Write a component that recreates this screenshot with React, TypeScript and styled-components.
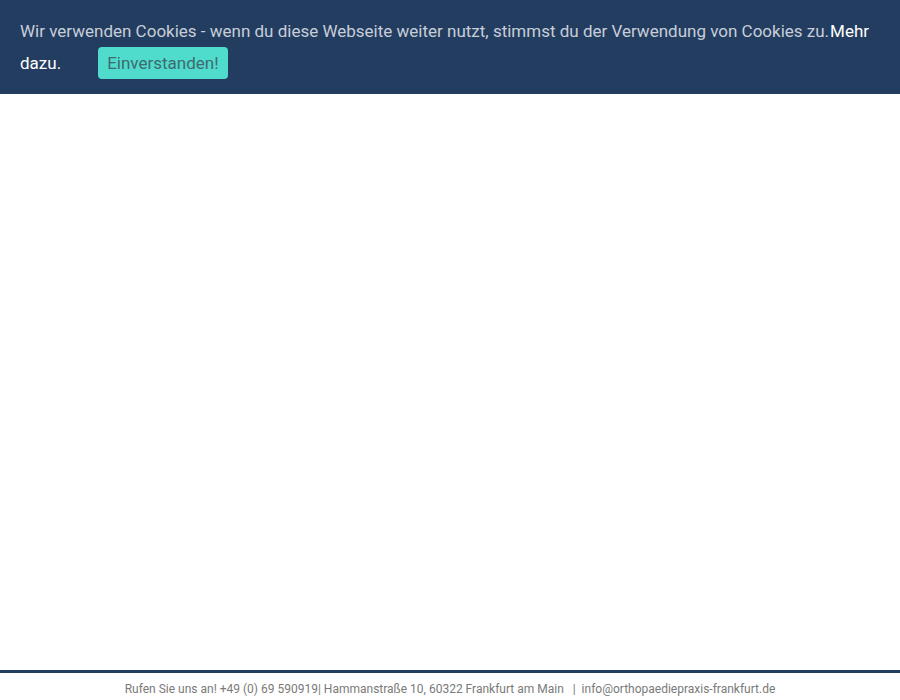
import React from "react";
import styled, { createGlobalStyle } from "styled-components";

const Global = createGlobalStyle`
  html, body { margin: 0; padding: 0; background: #fff; }
  body { font-family: Roboto, "Liberation Sans", sans-serif; }
  #root { height: 700px; }
`;

const Page = styled.div`
  height: 700px;
  display: flex;
  flex-direction: column;
  overflow: hidden;
`;

const Banner = styled.div`
  background: #233d61;
  padding: 15px 20px;
  font-size: 17px;
  line-height: 32px;
  color: #c7ced8;
`;

const Message = styled.span``;

const MoreLink = styled.a`
  color: #ffffff;
  text-decoration: none;
  margin-left: 1px;
`;

const AcceptButton = styled.button`
  display: inline-block;
  margin-left: 37px;
  height: 32px;
  padding: 0 9px;
  border: none;
  border-radius: 4px;
  background: #50dccc;
  color: #3f6a70;
  font-family: Roboto, "Liberation Sans", sans-serif;
  font-size: 17px;
  line-height: 32px;
  vertical-align: top;
  cursor: pointer;
`;

const Main = styled.main`
  flex: 1;
`;

const Footer = styled.footer`
  border-top: 3px solid #233d61;
  padding: 6px 0 1px;
  text-align: center;
  font-size: 12px;
  line-height: 20px;
  color: #7a7a7a;
`;

export default function App() {
  return (
    <>
      <Global />
      <Page>
        <Banner>
          <Message>
            Wir verwenden Cookies - wenn du diese Webseite weiter nutzt, stimmst du der Verwendung von Cookies zu.
          </Message>
          <MoreLink href="#">Mehr dazu.</MoreLink>
          <AcceptButton>Einverstanden!</AcceptButton>
        </Banner>
        <Main />
        <Footer>
          Rufen Sie uns an! +49 (0) 69 590919| Hammanstraße 10, 60322 Frankfurt am Main &nbsp;&nbsp;| &nbsp;info@orthopaediepraxis-frankfurt.de
        </Footer>
      </Page>
    </>
  );
}
